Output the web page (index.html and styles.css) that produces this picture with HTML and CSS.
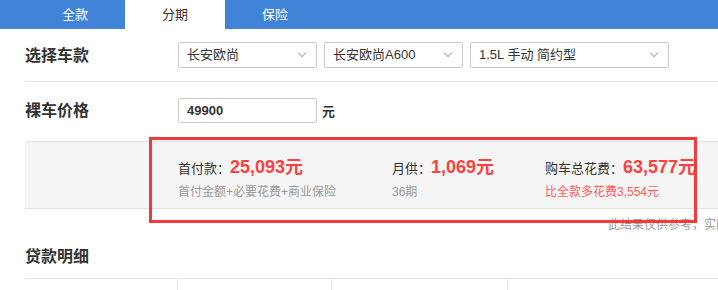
FILE: index.html
```html
<!DOCTYPE html>
<html lang="zh-CN">
<head>
  <meta charset="UTF-8">
  <title>购车计算</title>
  <link rel="stylesheet" href="styles.css">
</head>
<body>
  <div class="tabs">
    <span class="tab">全款</span>
    <span class="tab active">分期</span>
    <span class="tab">保险</span>
  </div>

  <div class="page">
    <div class="row row-car">
      <div class="row-label">选择车款</div>
      <div class="select w139">长安欧尚<i class="arrow"></i></div>
      <div class="select w139">长安欧尚A600<i class="arrow"></i></div>
      <div class="select w199">1.5L 手动 简约型<i class="arrow"></i></div>
    </div>

    <div class="row row-price">
      <div class="row-label">裸车价格</div>
      <div class="price-input">49900</div>
      <span class="unit">元</span>
    </div>

    <div class="summary">
      <div class="sum-item first">
        <div class="sum-main">首付款：<b>25,093元</b></div>
        <div class="sum-sub">首付金额+必要花费+商业保险</div>
      </div>
      <div class="sum-item second">
        <div class="sum-main">月供：<b>1,069元</b></div>
        <div class="sum-sub">36期</div>
      </div>
      <div class="sum-item">
        <div class="sum-main">购车总花费：<b>63,577元</b></div>
        <div class="sum-sub red">比全款多花费3,554元</div>
      </div>
    </div>

    <div class="note">此结果仅供参考，实际应缴费用以当地为准</div>

    <h3 class="section-title">贷款明细</h3>

    <div class="detail">
      <div class="cell c1"></div>
      <div class="cell c2"></div>
      <div class="cell c3"></div>
      <div class="cell c4"></div>
    </div>
  </div>

  <div class="highlight"></div>
</body>
</html>
```

FILE: styles.css
```css
body {
  margin: 0;
  width: 718px;
  height: 290px;
  overflow: hidden;
  position: relative;
  font-family: "Liberation Sans", "Noto Sans CJK SC", sans-serif;
  font-size: 13px;
  color: #333;
  background: #fff;
}

/* 顶部标签 */
.tabs {
  display: flex;
  height: 29px;
  padding-left: 25px;
  background: #4183d7;
}
.tab {
  width: 100px;
  line-height: 29px;
  text-align: center;
  color: #fff;
  font-size: 13px;
}
.tab.active {
  background: #fff;
  color: #333;
}

.page {
  margin-left: 25px;
  width: 900px;
}

.row {
  display: flex;
  align-items: center;
  box-sizing: border-box;
  border-bottom: 1px solid #e3e3e3;
}
.row-car {
  height: 53px;
  padding-bottom: 1px;
}
.row-price {
  height: 60px;
  padding-bottom: 3px;
}
.row-label {
  width: 153px;
  margin-top: -2px;
  font-size: 16px;
  font-weight: bold;
  color: #333;
}

.select {
  position: relative;
  box-sizing: border-box;
  height: 26px;
  line-height: 24px;
  margin-right: 7px;
  padding-left: 8px;
  border: 1px solid #ccc;
  border-radius: 2px;
  background: #fff;
}
.w139 { width: 139px; }
.w199 { width: 199px; }
.arrow {
  position: absolute;
  right: 11px;
  top: 7px;
  width: 5px;
  height: 5px;
  border-right: 1px solid #aaa;
  border-bottom: 1px solid #aaa;
  transform: rotate(45deg);
}

.price-input {
  box-sizing: border-box;
  width: 139px;
  height: 25px;
  line-height: 23px;
  padding-left: 8px;
  border: 1px solid #ccc;
  border-radius: 2px;
  font-weight: bold;
  color: #333;
}
.unit {
  margin-left: 5px;
  font-weight: bold;
}

/* 计算结果 */
.summary {
  display: flex;
  height: 67px;
  padding-left: 153px;
  padding-top: 5px;
  background: #f5f5f5;
  border-bottom: 1px solid #e3e3e3;
  box-sizing: border-box;
  align-items: center;
}
.sum-item.first { width: 214px; }
.sum-item.second { width: 153px; }
.sum-main {
  line-height: 22px;
}
.sum-main b {
  font-size: 18px;
  color: #ff4040;
}
.sum-sub {
  margin-top: 2px;
  font-size: 12px;
  color: #999;
}
.sum-sub.red {
  color: #ff5a5a;
}

.note {
  margin-top: 6px;
  padding-left: 583px;
  white-space: nowrap;
  font-size: 12px;
  color: #999;
}

.section-title {
  margin: 11px 0 0;
  height: 35px;
  font-size: 16px;
  font-weight: bold;
}

.detail {
  display: flex;
  height: 40px;
  border-top: 1px solid #e3e3e3;
}
.cell {
  border-right: 1px solid #e3e3e3;
}
.c1 { width: 152px; }
.c2 { width: 153px; }
.c3 { width: 175px; }
.c4 { width: 200px; border-right: none; }

/* 标注框 */
.highlight {
  position: absolute;
  left: 149px;
  top: 137px;
  width: 542px;
  height: 80px;
  border: 3px solid #f23a3a;
}
```
